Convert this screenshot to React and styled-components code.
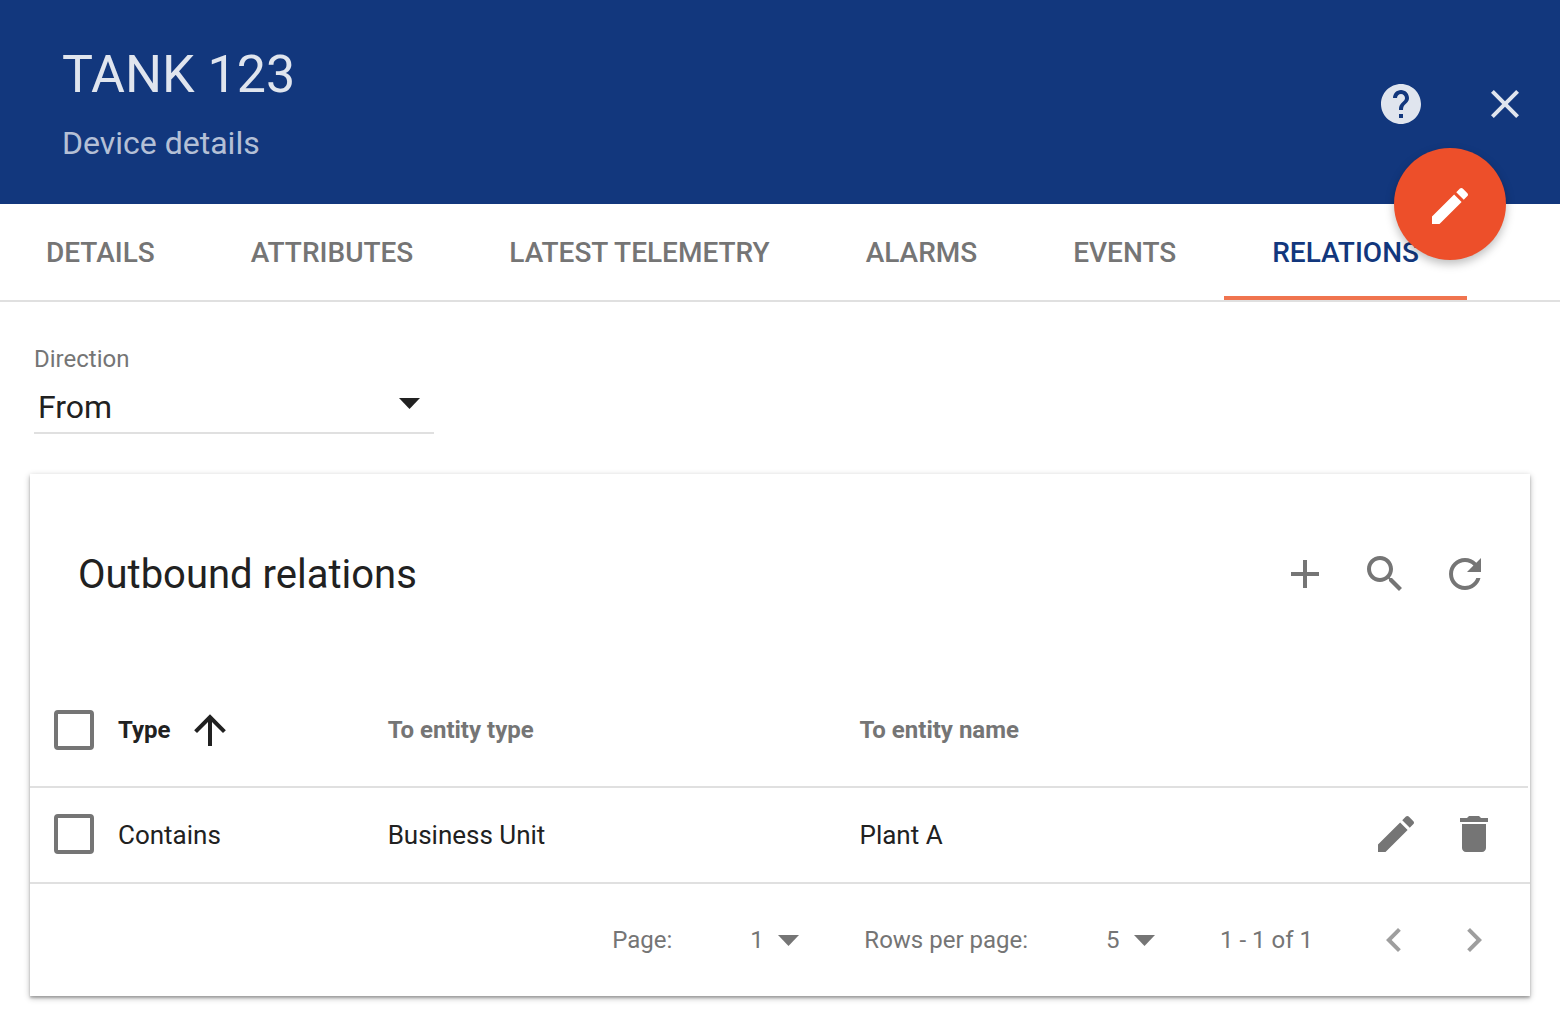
import React from 'react';
import styled, { createGlobalStyle, css } from 'styled-components';

const color = {
  primary: '#12377d',
  accent: '#ed4f2a',
  ink: '#f0744f',
  text: '#212121',
  muted: '#757575',
  disabled: '#9e9e9e',
  line: '#e0e0e0',
};

const GlobalStyle = createGlobalStyle`
  *, *::before, *::after { box-sizing: border-box; }
  body {
    margin: 0;
    background: #fff;
    color: ${color.text};
    font-family: Roboto, "Liberation Sans", sans-serif;
  }
  button, select, input { font: inherit; color: inherit; margin: 0; }
`;

const Header = styled.header`
  position: relative;
  display: flex;
  align-items: center;
  justify-content: space-between;
  min-height: 204px;
  padding: 8px 15px 4px 62px;
  background: ${color.primary};
  color: rgba(255, 255, 255, 0.87);
`;

const Titles = styled.div`
  display: flex;
  flex-direction: column;
  gap: 18px;
`;

const Title = styled.h1`
  margin: 0;
  font-size: 52px;
  line-height: 60px;
  font-weight: 400;
`;

const Subtitle = styled.p`
  margin: 0;
  font-size: 32px;
  line-height: 40px;
  color: rgba(255, 255, 255, 0.7);
`;

const Actions = styled.div`
  display: flex;
  align-items: center;
  gap: ${(p) => p.$gap || 0}px;
`;

const IconButton = styled.button`
  display: flex;
  align-items: center;
  justify-content: center;
  width: ${(p) => p.$width || 80}px;
  height: 80px;
  padding: 0;
  border: 0;
  background: none;
  color: ${(p) => p.$color || color.muted};
  cursor: pointer;

  &:disabled {
    color: ${color.disabled};
    cursor: default;
  }
`;

const Fab = styled.button`
  position: absolute;
  z-index: 2;
  right: 54px;
  bottom: -56px;
  display: flex;
  align-items: center;
  justify-content: center;
  width: 112px;
  height: 112px;
  padding: 4px 0 0;
  border: 0;
  border-radius: 50%;
  background: ${color.accent};
  color: #fff;
  box-shadow: 0 4px 10px rgba(0, 0, 0, 0.26);
  cursor: pointer;
`;

const Svg = styled.svg`
  display: block;
  flex: none;
  width: 48px;
  height: 48px;
  fill: currentColor;
`;

const Tabs = styled.nav`
  display: flex;
  overflow: hidden;
  border-bottom: 2px solid ${color.line};
`;

const Tab = styled.button`
  flex: none;
  height: 96px;
  padding: 2px 48px 0;
  border: 0;
  background: none;
  font-size: 28px;
  line-height: 32px;
  font-weight: 500;
  text-transform: uppercase;
  white-space: nowrap;
  color: ${color.muted};
  cursor: pointer;

  &:first-child { padding-left: 46px; }

  ${(p) => p.$active && css`
    color: ${color.primary};
    box-shadow: inset 0 -4px ${color.ink};
  `}
`;

const Content = styled.main`
  padding: 43px 30px 14px;
`;

const Field = styled.div`
  display: flex;
  flex-direction: column;
  gap: 9px;
  width: 400px;
  margin: 0 4px 40px;
`;

const FieldLabel = styled.label`
  font-size: 24px;
  line-height: 28px;
  color: ${color.muted};
`;

const SelectBox = styled.div`
  display: grid;
  align-items: center;

  > * { grid-area: 1 / 1; }
`;

const FieldSelectBox = styled(SelectBox)`
  border-bottom: 2px solid ${color.line};
`;

const PlainSelect = styled.select`
  appearance: none;
  width: 100%;
  padding: 0;
  border: 0;
  border-radius: 0;
  background: none;
  cursor: pointer;
`;

const FieldSelect = styled(PlainSelect)`
  height: 50px;
  padding: 0 48px 0 4px;
  font-size: 32px;
`;

const Caret = styled.svg`
  justify-self: end;
  width: 21px;
  height: 11px;
  fill: currentColor;
  pointer-events: none;
`;

const FieldCaret = styled(Caret)`
  margin: 0 14px 8px 0;
`;

const Card = styled.section`
  background: #fff;
  box-shadow: 0 2px 6px rgba(0, 0, 0, 0.3), 0 2px 2px rgba(0, 0, 0, 0.2);
`;

const CardToolbar = styled.div`
  display: flex;
  align-items: center;
  justify-content: space-between;
  min-height: 200px;
  padding: 0 25px 0 48px;
`;

const CardTitle = styled.h2`
  margin: 0;
  padding-top: 2px;
  font-size: 40px;
  line-height: 48px;
  font-weight: 400;
`;

const TableWrap = styled.div`
  padding-right: 2px;
`;

const Table = styled.table`
  width: 100%;
  table-layout: fixed;
  border-spacing: 0;
`;

const HeadCell = styled.th`
  width: ${(p) => p.$width || 'auto'};
  height: 112px;
  padding: 0;
  text-align: left;
  font-size: 24px;
  line-height: 28px;
  font-weight: 700;
  color: ${(p) => (p.$sorted ? color.text : color.muted)};
`;

const SortButton = styled.button`
  display: flex;
  align-items: center;
  gap: 15px;
  padding: 0;
  border: 0;
  background: none;
  cursor: pointer;
`;

const Cell = styled.td`
  height: 96px;
  padding: 0;
  border-top: 2px solid ${color.line};
  font-size: 26px;
  line-height: 32px;
`;

const RowActions = styled(Actions)`
  justify-content: flex-end;
  padding: 0 15px 2px 0;
`;

const Checkbox = styled.input`
  appearance: none;
  display: block;
  width: 40px;
  height: 40px;
  margin-left: 24px;
  border: 4px solid ${color.muted};
  border-radius: 4px;
  cursor: pointer;

  td > & { margin-bottom: 2px; }

  &:checked { background: ${color.muted}; }
`;

const Pager = styled.footer`
  display: flex;
  align-items: center;
  justify-content: flex-end;
  flex-wrap: wrap;
  min-height: 114px;
  padding-right: 16px;
  border-top: 2px solid ${color.line};
  font-size: 24px;
  line-height: 28px;
  color: ${color.muted};
`;

const PagerGroup = styled.div`
  display: flex;
  align-items: center;
  gap: 78px;
  margin-right: 65px;
`;

const PagerSelectBox = styled(SelectBox)`
  width: 49px;
`;

const PagerRange = styled.span`
  margin-right: 41px;
`;

const paths = {
  help: 'M12 2C6.48 2 2 6.48 2 12s4.48 10 10 10 10-4.48 10-10S17.52 2 12 2zm1 17h-2v-2h2v2zm2.07-7.75l-.9.92C13.45 12.9 13 13.5 13 15h-2v-.5c0-1.1.45-2.1 1.17-2.83l1.24-1.26c.37-.36.59-.86.59-1.41 0-1.1-.9-2-2-2s-2 .9-2 2H8c0-2.21 1.79-4 4-4s4 1.79 4 4c0 .88-.36 1.68-.93 2.25z',
  close: 'M19 6.41L17.59 5 12 10.59 6.41 5 5 6.41 10.59 12 5 17.59 6.41 19 12 13.41 17.59 19 19 17.59 13.41 12z',
  edit: 'M3 17.25V21h3.75L17.81 9.94l-3.75-3.75L3 17.25zM20.71 7.04c.39-.39.39-1.02 0-1.41l-2.34-2.34c-.39-.39-1.02-.39-1.41 0l-1.83 1.83 3.75 3.75 1.83-1.83z',
  add: 'M19 13h-6v6h-2v-6H5v-2h6V5h2v6h6v2z',
  search: 'M15.5 14h-.79l-.28-.27C15.41 12.59 16 11.11 16 9.5 16 5.91 13.09 3 9.5 3S3 5.91 3 9.5 5.91 16 9.5 16c1.61 0 3.09-.59 4.23-1.57l.27.28v.79l5 4.99L20.49 19l-4.99-5zm-6 0C7.01 14 5 11.99 5 9.5S7.01 5 9.5 5 14 7.01 14 9.5 11.99 14 9.5 14z',
  refresh: 'M17.65 6.35C16.2 4.9 14.21 4 12 4c-4.42 0-7.99 3.58-7.99 8s3.57 8 7.99 8c3.73 0 6.84-2.55 7.73-6h-2.08c-.82 2.33-3.04 4-5.65 4-3.31 0-6-2.69-6-6s2.69-6 6-6c1.66 0 3.14.69 4.22 1.78L13 11h7V4l-2.35 2.35z',
  up: 'M13 20H11V8L5.5 13.5L4.08 12.08L12 4.16L19.92 12.08L18.5 13.5L13 8V20Z',
  trash: 'M6 19c0 1.1.9 2 2 2h8c1.1 0 2-.9 2-2V7H6v12zM19 4h-3.5l-1-1h-5l-1 1H5v2h14V4z',
  prev: 'M15.41 7.41L14 6l-6 6 6 6 1.41-1.41L10.83 12z',
  next: 'M10 6L8.59 7.41 13.17 12l-4.58 4.59L10 18l6-6z',
};

function Icon({ name }) {
  return (
    <Svg viewBox="0 0 24 24" aria-hidden="true">
      <path d={paths[name]} />
    </Svg>
  );
}

function CaretIcon({ as: Component = Caret }) {
  return (
    <Component viewBox="0 0 21 11" aria-hidden="true">
      <path d="M0 0h21L10.5 11z" />
    </Component>
  );
}

const tabs = ['Details', 'Attributes', 'Latest telemetry', 'Alarms', 'Events', 'Relations'];

const relations = [{ type: 'Contains', entityType: 'Business Unit', entityName: 'Plant A' }];

function PagerSelect({ id, label, options }) {
  return (
    <PagerGroup>
      <label htmlFor={id}>{label}</label>
      <PagerSelectBox>
        <PlainSelect id={id}>
          {options.map((o) => <option key={o}>{o}</option>)}
        </PlainSelect>
        <CaretIcon />
      </PagerSelectBox>
    </PagerGroup>
  );
}

export default function App() {
  return (
    <>
      <GlobalStyle />
      <Header>
        <Titles>
          <Title>TANK 123</Title>
          <Subtitle>Device details</Subtitle>
        </Titles>
        <Actions $gap={24}>
          <IconButton $color="inherit" aria-label="Help"><Icon name="help" /></IconButton>
          <IconButton $color="inherit" aria-label="Close"><Icon name="close" /></IconButton>
        </Actions>
        <Fab aria-label="Edit device"><Icon name="edit" /></Fab>
      </Header>

      <Tabs>
        {tabs.map((tab) => (
          <Tab key={tab} $active={tab === 'Relations'}>{tab}</Tab>
        ))}
      </Tabs>

      <Content>
        <Field>
          <FieldLabel htmlFor="direction">Direction</FieldLabel>
          <FieldSelectBox>
            <FieldSelect id="direction">
              <option>From</option>
              <option>To</option>
            </FieldSelect>
            <CaretIcon as={FieldCaret} />
          </FieldSelectBox>
        </Field>

        <Card>
          <CardToolbar>
            <CardTitle>Outbound relations</CardTitle>
            <Actions>
              <IconButton aria-label="Add relation"><Icon name="add" /></IconButton>
              <IconButton aria-label="Search"><Icon name="search" /></IconButton>
              <IconButton aria-label="Refresh"><Icon name="refresh" /></IconButton>
            </Actions>
          </CardToolbar>

          <TableWrap>
            <Table>
              <thead>
                <tr>
                  <HeadCell $width="88px"><Checkbox type="checkbox" aria-label="Select all" /></HeadCell>
                  <HeadCell $width="18%" $sorted aria-sort="ascending">
                    <SortButton>Type<Icon name="up" /></SortButton>
                  </HeadCell>
                  <HeadCell $width="31.5%">To entity type</HeadCell>
                  <HeadCell>To entity name</HeadCell>
                  <HeadCell $width="180px" aria-label="Actions" />
                </tr>
              </thead>
              <tbody>
                {relations.map((r) => (
                  <tr key={r.entityName}>
                    <Cell><Checkbox type="checkbox" aria-label={`Select ${r.entityName}`} /></Cell>
                    <Cell>{r.type}</Cell>
                    <Cell>{r.entityType}</Cell>
                    <Cell>{r.entityName}</Cell>
                    <Cell>
                      <RowActions>
                        <IconButton $width={78} aria-label="Edit relation"><Icon name="edit" /></IconButton>
                        <IconButton $width={78} aria-label="Delete relation"><Icon name="trash" /></IconButton>
                      </RowActions>
                    </Cell>
                  </tr>
                ))}
              </tbody>
            </Table>
          </TableWrap>

          <Pager>
            <PagerSelect id="page" label="Page:" options={['1']} />
            <PagerSelect id="rows" label="Rows per page:" options={['5', '10', '15']} />
            <PagerRange>1 - 1 of 1</PagerRange>
            <Actions>
              <IconButton disabled aria-label="Previous page"><Icon name="prev" /></IconButton>
              <IconButton disabled aria-label="Next page"><Icon name="next" /></IconButton>
            </Actions>
          </Pager>
        </Card>
      </Content>
    </>
  );
}
